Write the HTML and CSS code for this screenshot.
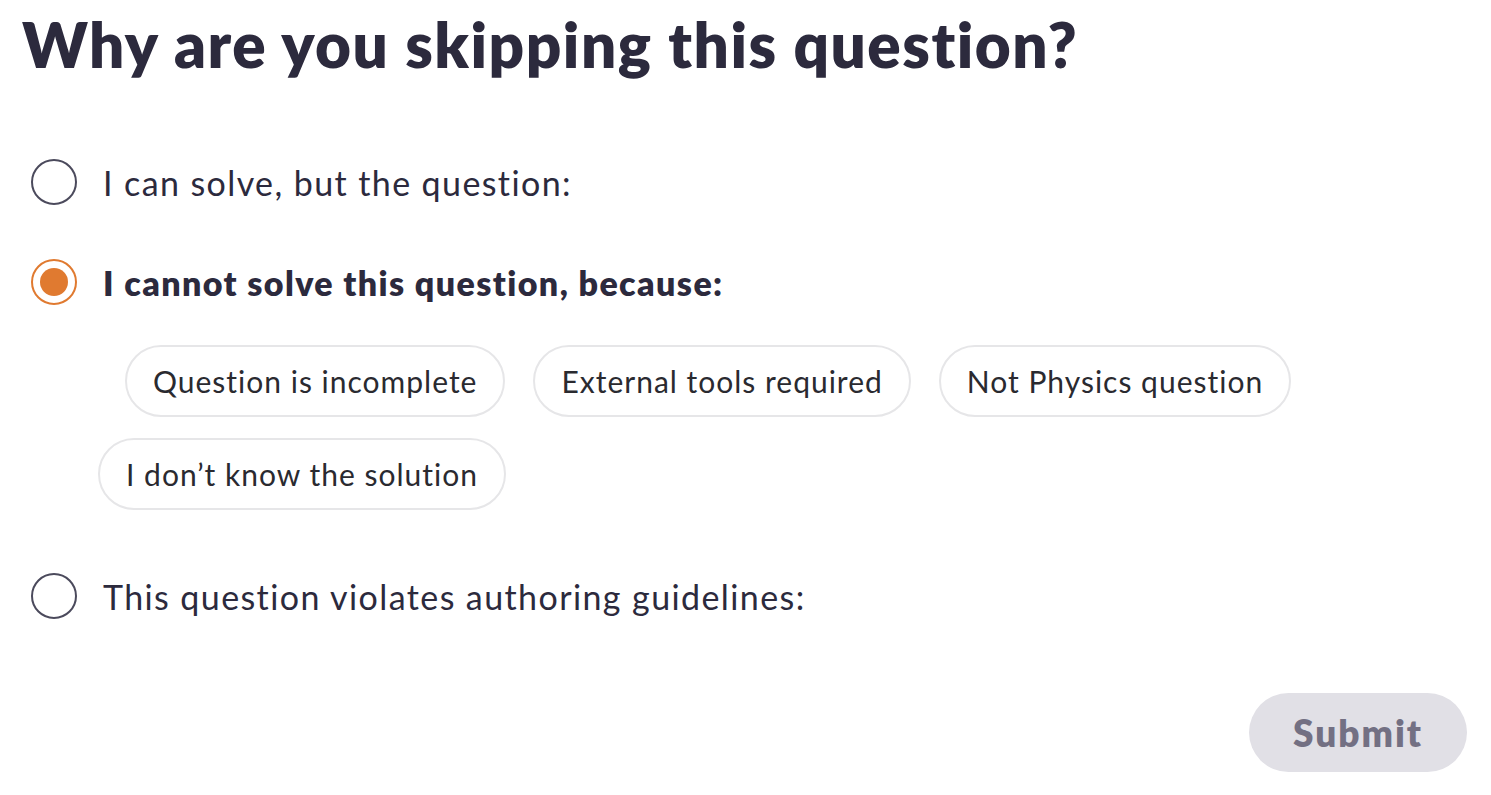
FILE: index.html
```html
<!DOCTYPE html>
<html>
<head>
<meta charset="utf-8">
<link rel="stylesheet" href="styles.css">
</head>
<body>
<div class="page">
  <h1 class="title">Why are you skipping this question?</h1>
  <div class="options">
    <div class="option">
      <span class="radio"></span>
      <span class="label">I can solve, but the question:</span>
    </div>
    <div class="option">
      <span class="radio checked"></span>
      <span class="label bold">I cannot solve this question, because:</span>
    </div>
    <div class="chips">
      <div class="chip first">Question is incomplete</div>
      <div class="chip">External tools required</div>
      <div class="chip">Not Physics question</div>
      <div class="chip">I don’t know the solution</div>
    </div>
    <div class="option last">
      <span class="radio"></span>
      <span class="label">This question violates authoring guidelines:</span>
    </div>
  </div>
  <div class="footer">
    <button class="submit">Submit</button>
  </div>
</div>
</body>
</html>
```
FILE: styles.css
```css
html, body {
  margin: 0;
  padding: 0;
  background: #ffffff;
}
body {
  font-family: Lato, "Liberation Sans", sans-serif;
  color: #2c2a3d;
}
.page {
  padding: 6px 24px 0 22px;
  width: 1445px;
}
.title {
  margin: 0;
  font-size: 62px;
  font-weight: 800;
  line-height: 76px;
  letter-spacing: 1.5px;
}
.options {
  margin-top: 77px;
  padding-left: 9px;
}
.option {
  display: flex;
  align-items: center;
  gap: 26px;
  height: 46px;
}
.option + .option {
  margin-top: 54px;
}
.option.last {
  margin-top: 63px;
}
.radio {
  width: 42px;
  height: 42px;
  border: 2px solid #4b4a5c;
  border-radius: 50%;
  flex: none;
  box-sizing: content-box;
  position: relative;
}
.radio.checked {
  border-color: #e07a30;
}
.radio.checked::after {
  content: "";
  position: absolute;
  left: 7px;
  top: 7px;
  width: 28px;
  height: 28px;
  border-radius: 50%;
  background: #e07a30;
}
.label {
  font-size: 34px;
  font-weight: 400;
  letter-spacing: 1.4px;
}
.label.bold {
  font-weight: 800;
}
.chips {
  display: flex;
  flex-wrap: wrap;
  gap: 21px 28px;
  margin-top: 40px;
  margin-left: 67px;
  width: 1220px;
}
.chip {
  height: 72px;
  box-sizing: border-box;
  border: 2px solid #e6e6e8;
  border-radius: 36px;
  padding: 0 26px;
  display: flex;
  align-items: center;
  font-size: 30px;
  letter-spacing: 1px;
  color: #2a2a30;
}
.chip.first {
  margin-left: 27px;
}
.footer {
  display: flex;
  justify-content: flex-end;
  margin-top: 74px;
}
.submit {
  width: 218px;
  height: 79px;
  border: none;
  border-radius: 40px;
  background: #e1e0e6;
  color: #737083;
  font-family: Lato, "Liberation Sans", sans-serif;
  font-size: 37px;
  font-weight: 800;
  letter-spacing: 2px;
}
```
